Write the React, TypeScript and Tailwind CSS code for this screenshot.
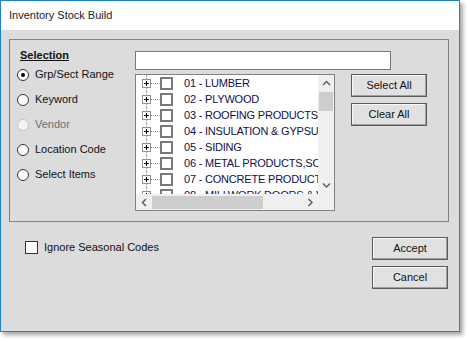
import React from "react";

const FONT = { fontFamily: '"Liberation Sans", Arial, sans-serif' };

function Radio({ label, checked, disabled }: { label: string; checked?: boolean; disabled?: boolean }) {
  return (
    <div className="flex items-center h-[25px]">
      <span
        className={
          "w-[12px] h-[12px] rounded-full border flex items-center justify-center " +
          (disabled ? "border-[#c4c4c4] bg-[#f4f4f4]" : "border-[#333333] bg-white")
        }
      >
        {checked && <span className="w-[4px] h-[4px] rounded-full bg-black" />}
      </span>
      <span className={"ml-[6px] " + (disabled ? "text-[#6d6d6d]" : "text-[#111111]")}>{label}</span>
    </div>
  );
}

function Chevron({ dir }: { dir: "up" | "down" | "left" | "right" }) {
  const d =
    dir === "up"
      ? "M1 5 L4.5 1.5 L8 5"
      : dir === "down"
      ? "M1 1.5 L4.5 5 L8 1.5"
      : dir === "left"
      ? "M5 1 L1.5 4.5 L5 8"
      : "M1.5 1 L5 4.5 L1.5 8";
  const w = dir === "up" || dir === "down" ? 9 : 7;
  const h = dir === "up" || dir === "down" ? 7 : 9;
  return (
    <svg width={w} height={h} viewBox={`0 0 ${w} ${h}`}>
      <path d={d} fill="none" stroke="#606060" strokeWidth="1.5" />
    </svg>
  );
}

function TreeRow({ text }: { text: string }) {
  return (
    <div className="relative flex items-center h-[16px] shrink-0 whitespace-nowrap">
      <div className="absolute left-[10px] top-0 bottom-0 border-l border-dotted border-[#a0a0a0]" />
      <div className="ml-[6px] shrink-0 relative w-[9px] h-[9px] border border-[#919191] bg-white flex items-center justify-center z-10">
        <span className="absolute w-[5px] h-[1px] bg-black" />
        <span className="absolute w-[1px] h-[5px] bg-black" />
      </div>
      <div className="w-[9px] shrink-0 border-t border-dotted border-[#a0a0a0]" />
      <div className="w-[13px] h-[13px] shrink-0 border-2 border-[#7a7a7a] bg-white" />
      <span className="ml-[11px] shrink-0 text-[11px] text-[#10104a] tracking-[-0.2px]">{text}</span>
    </div>
  );
}

function Btn({ label }: { label: string }) {
  return (
    <div className="w-[76px] h-[23px] border border-[#5c5c5c] bg-[#e1e1e1] shadow-[inset_-1px_-1px_0_#a0a0a0,inset_1px_1px_0_#f8f8f8] flex items-center justify-center text-[11px] text-[#111111]">
      {label}
    </div>
  );
}

export default function App() {
  const items = [
    "01 - LUMBER",
    "02 - PLYWOOD",
    "03 - ROOFING PRODUCTS",
    "04 - INSULATION & GYPSUM",
    "05 - SIDING",
    "06 - METAL PRODUCTS,SCREEN",
    "07 - CONCRETE PRODUCTS",
    "08 - MILLWORK DOORS & WINDOWS",
  ];
  return (
    <div className="w-[467px] h-[339px] bg-white" style={FONT}>
      <div className="w-[460px] h-[332px] border border-[#1883d7] flex flex-col shadow-[3px_3px_4px_rgba(0,0,0,0.35)] text-[11px] leading-[13px]">
        <div className="h-[29px] bg-white flex items-center pl-[8px] text-[11px] text-[#1a1a1a]">
          Inventory Stock Build
        </div>
        <div className="flex-1 bg-[#dcdcdc] flex flex-col">
          <div className="ml-[8px] mt-[9px] w-[440px] h-[183px] border border-[#828282] flex">
            <div className="w-[125px] pl-[7px] pt-[9px] flex flex-col">
              <div className="ml-[3px] font-bold underline text-[#111111] h-[13px]">Selection</div>
              <Radio label="Grp/Sect Range" checked />
              <Radio label="Keyword" />
              <Radio label="Vendor" disabled />
              <Radio label="Location Code" />
              <Radio label="Select Items" />
            </div>
            <div className="flex flex-col pt-[11px]">
              <div className="w-[256px] h-[19px] border border-[#7a7a7a] bg-white" />
              <div className="flex mt-[4px]">
                <div className="w-[200px] h-[137px] border border-[#828282] bg-white flex flex-col">
                  <div className="flex h-[119px] shrink-0">
                    <div className="flex-1 min-w-0 overflow-hidden">
                      {items.map((t) => (
                        <TreeRow key={t} text={t} />
                      ))}
                    </div>
                    <div className="w-[16px] shrink-0 bg-[#f0f0f0] flex flex-col items-center">
                      <div className="h-[17px] flex items-center justify-center">
                        <Chevron dir="up" />
                      </div>
                      <div className="w-[14px] h-[19px] bg-[#cdcdcd]" />
                      <div className="flex-1" />
                      <div className="h-[17px] flex items-center justify-center">
                        <Chevron dir="down" />
                      </div>
                    </div>
                  </div>
                  <div className="flex h-[16px] shrink-0">
                    <div className="flex-1 bg-[#f0f0f0] flex items-center">
                      <div className="w-[16px] flex items-center justify-center">
                        <Chevron dir="left" />
                      </div>
                      <div className="w-[111px] h-[13px] bg-[#cdcdcd]" />
                      <div className="flex-1" />
                      <div className="w-[16px] flex items-center justify-center">
                        <Chevron dir="right" />
                      </div>
                    </div>
                    <div className="w-[16px] bg-[#f0f0f0]" />
                  </div>
                </div>
                <div className="ml-[16px] flex flex-col gap-[6px]">
                  <Btn label="Select All" />
                  <Btn label="Clear All" />
                </div>
              </div>
            </div>
          </div>
          <div className="flex justify-between mt-[15px] mr-[11px]">
            <div className="flex items-start ml-[24px] mt-[4px]">
              <div className="w-[13px] h-[13px] border border-[#333333] bg-white" />
              <span className="ml-[6px] text-[#111111]">Ignore Seasonal Codes</span>
            </div>
            <div className="flex flex-col gap-[6px]">
              <Btn label="Accept" />
              <Btn label="Cancel" />
            </div>
          </div>
        </div>
      </div>
    </div>
  );
}
